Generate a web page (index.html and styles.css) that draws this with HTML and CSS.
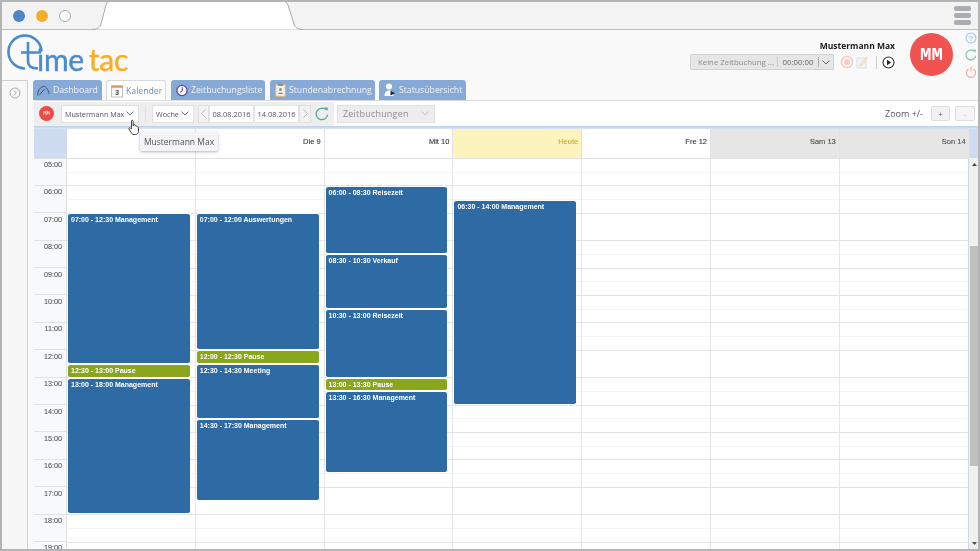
FILE: index.html
```html
<!DOCTYPE html>
<html lang="de">
<head>
<meta charset="utf-8">
<title>TimeTac Kalender</title>
<link rel="stylesheet" href="styles.css">
</head>
<body>
<div class="window">
  <div class="chrome">
    <svg class="chrome-tab" width="320" height="30" viewBox="0 0 320 30"><path d="M92 29.500C98 29.500 100 27 101 24L106 5C107 2 108 1 110 1H283C285 1 287 2 288 5L294 24C295 27 297 29.500 303 29.500" fill="#fff" stroke="#a9a9a9"/></svg>
    <span class="light light-blue"></span><span class="light light-orange"></span><span class="light light-white"></span>
    <div class="burger"><i></i><i></i><i></i></div>
  </div>
  <header class="app-header">
    <div class="logo">
      <svg class="logo-mark" width="44" height="40" viewBox="0 0 44 40"><path d="M36.200 16A16.500 16.500 0 1 0 20 35.500" fill="none" stroke="#4a8bcb" stroke-width="2.600"/><path d="M23 9V28C23 33 26 35.500 33 35.500M16 19.500H36" fill="none" stroke="#4a8bcb" stroke-width="2.600"/></svg>
      <span class="logo-time">ime</span><span class="logo-tac">tac</span>
    </div>
    <div class="user-box">
      <div class="user-col">
        <div class="user-name">Mustermann Max</div>
        <div class="timer-row">
          <div class="timer"><span class="timer-text">Keine Zeitbuchung ...</span><span class="timer-time">00:00:00</span><span class="timer-caret"><svg width="8" height="5" viewBox="0 0 8 5"><path d="M.5.5 4 4 7.500.5" fill="none" stroke="#666"/></svg></span></div>
          <svg class="ic" width="14" height="14" viewBox="0 0 14 14"><circle cx="7" cy="7" r="5.500" fill="none" stroke="#f6c9c6" stroke-width="1.500"/><rect x="4.300" y="4.300" width="5.400" height="5.400" rx="1" fill="#f6c9c6"/></svg>
          <svg class="ic" width="14" height="14" viewBox="0 0 14 14"><rect x="2" y="3" width="9" height="10" fill="#eef3fa" stroke="#d5e2f1"/><path d="M5 9 11 2l2 1-6 7-2.500 1z" fill="#fbe6c4" stroke="#f4d9b0" stroke-width=".6"/></svg>
          <span class="timer-sep"></span>
          <svg class="ic" width="13" height="13" viewBox="0 0 13 13"><circle cx="6.500" cy="6.500" r="5.500" fill="none" stroke="#333" stroke-width="1.100"/><path d="M5 3.800 9.200 6.500 5 9.200z" fill="#222"/></svg>
        </div>
      </div>
      <div class="avatar-big">MM</div>
      <div class="side-icons">
        <svg width="12" height="12" viewBox="0 0 12 12"><circle cx="6" cy="6" r="5" fill="none" stroke="#9cc9ec" stroke-width="1.100"/><text x="6" y="8.600" class="q-mark">?</text></svg>
        <svg width="12" height="12" viewBox="0 0 12 12"><path d="M10.800 6.500A4.900 4.900 0 1 1 9.200 2.300" fill="none" stroke="#7cc5b4" stroke-width="1.200"/><path d="M7.800.4h3.100v3.100z" fill="#7cc5b4"/></svg>
        <svg width="12" height="12" viewBox="0 0 12 12"><path d="M3.500 2.900a4.600 4.600 0 1 0 5 0M6 .8v4.700" fill="none" stroke="#f3a9a6" stroke-width="1.200"/></svg>
      </div>
    </div>
  </header>
  <div class="workspace">
    <aside class="sidebar"><svg class="side-toggle" width="12" height="12" viewBox="0 0 12 12"><circle cx="6" cy="6" r="5" fill="none" stroke="#aaa"/><path d="M4.800 3.500 7.300 6 4.800 8.500" fill="none" stroke="#aaa"/></svg></aside>
    <main class="main">
      <nav class="tabs">
        <a class="tab tab-dash"><svg width="13" height="14" viewBox="0 0 14 14"><path d="M1 13A9.500 9.500 0 0 1 7 3c3 0 5 4 6 8" fill="none" stroke="#3c4d66" stroke-width="1"/><path d="M3 12 8 6" stroke="#3c4d66"/></svg>Dashboard</a>
        <a class="tab tab-active"><svg width="12" height="14" viewBox="0 0 13 14"><rect x=".5" y="1.500" width="12" height="12" fill="#fff" stroke="#bbb"/><rect x=".5" y="1" width="12" height="2.500" fill="#e8935a"/><text x="6.500" y="11.500" class="cal-num">3</text></svg>Kalender</a>
        <a class="tab tab-list"><svg width="12" height="13" viewBox="0 0 13 13"><circle cx="6.500" cy="6.500" r="5.500" fill="#fff" stroke="#5b4c9c" stroke-width="1.400"/><path d="M6.800 3v3.800L4.500 8.500" fill="none" stroke="#5b4c9c" stroke-width="1.200"/></svg>Zeitbuchungsliste</a>
        <a class="tab tab-hours"><svg width="11" height="14" viewBox="0 0 11 14"><rect x=".7" y="1.700" width="9.600" height="11.600" fill="#f8efdc" stroke="#d9b476"/><rect x="3" y=".5" width="5" height="2.500" fill="#7f93b2"/><circle cx="5.500" cy="6.500" r="1.500" fill="#7f93b2"/><path d="M3 11c0-2 5-2 5 0z" fill="#7f93b2"/></svg>Stundenabrechnung</a>
        <a class="tab tab-status"><svg width="12" height="14" viewBox="0 0 12 14"><circle cx="5" cy="3.500" r="3" fill="#fff"/><path d="M.5 13c0-4 2-5.500 4.500-5.500S9.500 9 9.500 13z" fill="#fff"/><path d="M6.500 7.800 11 10.200 6.500 12.600z" fill="#222"/></svg>Statusübersicht</a>
      </nav>
      <div class="toolbar">
        <div class="tool-group">
          <span class="avatar-small">MM</span>
          <span class="select select-user">Mustermann Max<svg width="8" height="5" viewBox="0 0 8 5"><path d="M.5.5 4 4 7.500.5" fill="none" stroke="#777"/></svg></span>
          <span class="tool-sep"></span>
          <span class="select select-week">Woche<svg width="8" height="5" viewBox="0 0 8 5"><path d="M.5.5 4 4 7.500.5" fill="none" stroke="#777"/></svg></span>
          <span class="date-nav date-prev"><svg width="5" height="9" viewBox="0 0 5 9"><path d="M4.500.5.500 4.500 4.500 8.500" fill="none" stroke="#bbb"/></svg></span>
          <span class="date">08.08.2016</span>
          <span class="date">14.08.2016</span>
          <span class="date-nav"><svg width="5" height="9" viewBox="0 0 5 9"><path d="M.5.500 4.500 4.500.5 8.500" fill="none" stroke="#bbb"/></svg></span>
          <svg class="reload" width="14" height="14" viewBox="0 0 12 12"><path d="M10.800 6.500A4.900 4.900 0 1 1 9.200 2.300" fill="none" stroke="#49ad9b" stroke-width="1.100"/><path d="M7.800.4h3.100v3.100z" fill="#49ad9b"/></svg>
        </div>
        <span class="select select-type">Zeitbuchungen<svg width="8" height="5" viewBox="0 0 8 5"><path d="M.5.5 4 4 7.500.5" fill="none" stroke="#bbb"/></svg></span>
        <span class="zoom-label">Zoom +/-</span>
        <span class="zoom-btn">+</span>
        <span class="zoom-btn zoom-off">-</span>
      </div>
      <div class="accent"></div>
      <div class="calendar">
        <div class="cal-main">
          <div class="day-heads">
            <div class="corner"></div>
            <div class="dh"></div>
            <div class="dh">Die 9</div>
            <div class="dh">Mit 10</div>
            <div class="dh dh-today">Heute</div>
            <div class="dh">Fre 12</div>
            <div class="dh dh-off">Sam 13</div>
            <div class="dh dh-off">Son 14</div>
          </div>
          <div class="cal-body">
            <div class="times">
              <div class="t">05:00</div><div class="t">06:00</div><div class="t">07:00</div><div class="t">08:00</div><div class="t">09:00</div><div class="t">10:00</div><div class="t">11:00</div><div class="t">12:00</div><div class="t">13:00</div><div class="t">14:00</div><div class="t">15:00</div><div class="t">16:00</div><div class="t">17:00</div><div class="t">18:00</div><div class="t">19:00</div>
            </div>
            <div class="day">
              <div class="ev" style="grid-row:5/16">07:00 - 12:30 Management</div>
              <div class="ev ev-pause" style="grid-row:16/17">12:30 - 13:00 Pause</div>
              <div class="ev" style="grid-row:17/27">13:00 - 18:00 Management</div>
            </div>
            <div class="day">
              <div class="ev" style="grid-row:5/15">07:00 - 12:00 Auswertungen</div>
              <div class="ev ev-pause" style="grid-row:15/16">12:00 - 12:30 Pause</div>
              <div class="ev" style="grid-row:16/20">12:30 - 14:30 Meeting</div>
              <div class="ev" style="grid-row:20/26">14:30 - 17:30 Management</div>
            </div>
            <div class="day">
              <div class="ev" style="grid-row:3/8">06:00 - 08:30 Reisezeit</div>
              <div class="ev" style="grid-row:8/12">08:30 - 10:30 Verkauf</div>
              <div class="ev" style="grid-row:12/17">10:30 - 13:00 Reisezeit</div>
              <div class="ev ev-pause" style="grid-row:17/18">13:00 - 13:30 Pause</div>
              <div class="ev" style="grid-row:18/24">13:30 - 16:30 Management</div>
            </div>
            <div class="day">
              <div class="ev" style="grid-row:4/19">06:30 - 14:00 Management</div>
            </div>
            <div class="day"></div>
            <div class="day"></div>
            <div class="day"></div>
          </div>
        </div>
        <div class="scrollbar">
          <div class="sb-head"></div>
          <div class="sb-track">
            <svg width="5" height="3" viewBox="0 0 5 3" class="sb-arrow"><path d="M2.500 0 5 3H0z" fill="#444"/></svg>
            <div class="sb-thumb"></div>
            <svg width="5" height="3" viewBox="0 0 5 3" class="sb-arrow"><path d="M0 0H5L2.500 3z" fill="#444"/></svg>
          </div>
        </div>
      </div>
    </main>
  </div>
  <div class="tooltip">Mustermann Max</div>
  <svg class="cursor" width="13" height="17" viewBox="0 0 13 17"><path d="M3.500 1.500c1-.7 1.700 0 1.700 1V7l.5-1.500c1-.4 1.500.2 1.500 1l.2.500c.8-.5 1.500 0 1.500.8.800-.3 1.600 0 1.600 1v3.200c0 2-1 3.500-3 3.500H6c-1.500 0-2.500-1-3-2L1 10c-.4-1 .5-1.700 1.500-1l1 1z" fill="#fff" stroke="#333" stroke-width=".9"/></svg>
</div>
</body>
</html>
```

FILE: styles.css
```css
* { box-sizing: border-box; }
html, body { margin: 0; padding: 0; background: #fff; }
body { font-family: "Open Sans", "Liberation Sans", sans-serif; }
.window {
  position: relative; width: 980px; height: 551px; overflow: hidden;
  display: flex; flex-direction: column;
  border: 2px solid #b4b4b4;
  background: #f9f9f9; filter: blur(.3px);
}
.chrome {
  position: relative; height: 28px; flex: none; background: #f3f3f3;
  border-bottom: 1px solid #bdbdbd; display: flex; align-items: center; padding-left: 11px; gap: 11px;
}
.chrome-tab { position: absolute; left: -2px; top: -2px; }
.light { position: relative; width: 12px; height: 12px; border-radius: 50%; }
.light-blue { background: #4b86c6; }
.light-orange { background: #f3ae2c; }
.light-white { background: #fff; border: 1px solid #aaa; }
.burger { margin-left: auto; margin-right: 7px; display: flex; flex-direction: column; gap: 2px; width: 17px; }
.burger i { display: block; height: 5px; border-radius: 2px; background: #a9adb2; }

.app-header {
  height: 50px; flex: none; display: flex; justify-content: space-between; position: relative;
}
.logo { display: flex; align-items: flex-end; position: relative; padding: 0 0 0 3px; height: 43px; }
.logo-mark { flex: none; margin-top: 3px; }
.logo-time, .logo-tac { font-family: Lato, sans-serif; font-size: 30px; line-height: 34px; letter-spacing: -.3px; margin-bottom: -3px; -webkit-text-stroke: .4px currentColor; }
.logo-time { color: #4a8bcb; margin-left: -12px; }
.logo-tac { color: #f9ae25; margin-left: 5px; }

.user-box { display: flex; align-items: flex-start; }
.user-col { display: flex; flex-direction: column; align-items: flex-end; margin-top: 10px; }
.user-name { font-size: 8.500px; font-weight: 700; color: #1a1a1a; line-height: 12px; }
.timer-row { display: flex; align-items: center; margin-top: 2px; gap: 1px; }
.timer {
  width: 144px; height: 16px; background: #e6e6e6; border: 1px solid #d2d2d2; border-radius: 2px;
  display: flex; align-items: center; font-size: 7.800px; color: #8c8c8c; margin-right: 5px;
}
.timer-text { width: 87px; padding-left: 7px; border-right: 1px solid #c8c8c8; white-space: nowrap; }
.timer-time { width: 41px; text-align: center; color: #666; border-right: 1px solid #aaa; }
.timer-caret { flex: 1; display: flex; justify-content: center; }
.ic { flex: none; }
.timer-sep { width: 1px; height: 13px; background: #ccc; margin: 0 4px 0 6px; }
.avatar-big {
  width: 43px; height: 43px; border-radius: 50%; background: #f15350; color: #fff; flex: none;
  display: flex; align-items: center; justify-content: center; margin: 3px 0 0 15px;
  font-family: "Liberation Mono", monospace; font-size: 19px; font-weight: 700;
}
.side-icons { display: flex; flex-direction: column; gap: 5px; margin: 2px 1px 0 12px; }
.side-icons svg { display: block; }
.q-mark { font: 700 7.500px "Liberation Sans", sans-serif; fill: #9cc9ec; text-anchor: middle; }

.workspace { flex: 1; display: flex; min-height: 0; }
.sidebar {
  width: 26px; flex: none; background: #f7f7f7; border: solid #cfcfcf; border-width: 1px 1px 0 0; padding: 6px 0 0 7px;
}
.side-toggle { display: block; }
.main { flex: 1; min-width: 0; padding-left: 5px; display: flex; flex-direction: column; }
.tabs { height: 20px; flex: none; display: flex; gap: 4px; }
.tab {
  height: 20px; background: #86a9d6; color: #f1f5fb; font-size: 8.700px; border-radius: 3px 3px 0 0;
  display: flex; align-items: center; gap: 3px; padding-left: 5px; white-space: nowrap;
}
.tab svg { flex: none; }
.tab-dash { width: 69px; padding-left: 4px; }
.tab-active { width: 60px; background: #fff; color: #6a8fc3; border: 1px solid #d9d9d9; border-bottom: 0; padding-left: 4px; }
.tab-list { width: 94px; margin-left: 1px; }
.tab-hours { width: 105px; margin-left: 1px; }
.tab-status { width: 87px; }
.toolbar {
  height: 26px; flex: none; margin-left: 1px; background: #fff; display: flex; align-items: center;
  border-top: 1px solid #dcdcdc; font-size: 7.200px; color: #555; padding-right: 3px;
}
.tool-group { display: flex; align-items: center; height: 24px; background: #eee; width: 300px; padding-left: 5px; flex: none; }
.avatar-small {
  width: 15px; height: 15px; border-radius: 50%; background: #ef4a47; color: #fff; flex: none;
  font: 5.500px "Liberation Mono", monospace; display: flex; align-items: center; justify-content: center;
}
.select {
  height: 18px; background: #fff; border: 1px solid #e0e0e0; display: flex; align-items: center; justify-content: space-between;
  padding: 0 4px 0 3px; white-space: nowrap;
}
.select-user { width: 78px; margin-left: 7px; }
.tool-sep { width: 1px; height: 16px; background: #e2e2e2; margin: 0 6px; }
.select-week { width: 42px; }
.date-nav { width: 12px; height: 18px; display: flex; align-items: center; justify-content: center; background: #f3f3f3; border: 1px solid #e0e0e0; flex: none; }
.date-prev { width: 11px; margin-left: 4px; }
.date { width: 45px; height: 18px; background: #fff; border: 1px solid #e4e4e4; display: flex; align-items: center; justify-content: center; font-size: 7.500px; flex: none; }
.reload { margin-left: 4px; flex: none; }
.select-type { width: 98px; margin-left: 3px; background: #ededed; color: #8d8d8d; font-size: 9px; padding: 0 5px; letter-spacing: .2px; }
.zoom-label { margin-left: auto; font-size: 9px; color: #555; margin-right: 8px; }
.zoom-btn {
  width: 19px; height: 15px; background: #f2f2f2; border: 1px solid #dedede; border-radius: 2px; margin-right: 5px;
  display: flex; align-items: center; justify-content: center; font-size: 8px; color: #555;
}
.zoom-btn:last-child { margin-right: 0; width: 20px; }
.zoom-off { color: #bbb; background: #f5f5f5; }
.accent { height: 3px; flex: none; margin-left: 1px; background: linear-gradient(#b9cfea, #dbe6f4); }

.calendar { flex: 1; min-height: 0; margin-left: 1px; display: flex; background: #fff; }
.cal-main { width: 935px; flex: none; display: flex; flex-direction: column; min-height: 0; border-right: 1px solid #cfd8ee; }
.day-heads { height: 29.500px; flex: none; display: grid; grid-template-columns: 33px repeat(7, 128.800px); border-bottom: 1px solid #e0e0e0; }
.corner { background: #cddcf0; }
.dh {
  border-right: 1px solid #e2e2e2; text-align: right; font: 7.500px/26px "Liberation Sans", sans-serif;
  color: #333; padding-right: 3px; -webkit-text-stroke: .1px #333;
}
.dh-today { background: #fdf3bd; color: #c9a033; -webkit-text-stroke: 0; }
.dh-off { background: #e6e6e6; color: #555; }
.dh:last-child { border-right: 0; }
.cal-body { flex: 1; min-height: 0; overflow: hidden; display: grid; grid-template-columns: 33px repeat(7, 128.800px); align-items: start; }
.times { background: #f6fafd; border-right: 1px solid #e0e0e0; }
.t {
  height: 27.400px; border-bottom: 1px solid #e2e2e2; text-align: right; padding: 1.500px 4px 0 0;
  font: 7.200px/10px "Liberation Sans", sans-serif; color: #555; -webkit-text-stroke: .1px #555;
}
.day {
  height: 411px; display: grid; grid-template-rows: repeat(30, 13.700px); grid-template-columns: 1fr;
  border-right: 1px solid #e6e6e6; padding: 0 5px 0 1px;
  background: repeating-linear-gradient(#fff 0, #fff 12.800px, #f3f3f3 12.800px, #f3f3f3 13.700px, #fff 13.700px, #fff 26.400px, #e4e4e4 26.400px, #e4e4e4 27.400px);
}
.day:last-child { border-right: 0; }
.ev {
  background: #2e6ba5; color: #fff; border-radius: 2.500px; border: solid #fff; border-width: .5px 0;
  font: 700 7px/9px "Liberation Sans", sans-serif; padding: 1px 3px; white-space: nowrap; overflow: hidden; min-height: 0;
}
.ev-pause { background: #8aa61c; }

.scrollbar { width: 10px; flex: none; display: flex; flex-direction: column; background: #f0f0f0; }
.sb-head { height: 29px; flex: none; background: #cddcf0; }
.sb-track { flex: 1; display: flex; flex-direction: column; align-items: center; padding-top: 5px; }
.sb-arrow { flex: none; display: block; }
.sb-thumb { width: 9px; height: 220px; background: #c0c0c0; margin-top: 80px; margin-bottom: 76px; }

.tooltip {
  position: absolute; left: 138px; top: 130px; width: 78px; height: 19px; background: #f2f4f8; border-radius: 2px;
  box-shadow: 0 1px 3px rgba(0,0,0,.3); font-size: 8.500px; color: #555; display: flex; align-items: center; justify-content: center; white-space: nowrap;
}
.cursor { position: absolute; left: 126px; top: 117px; }
.cal-num { font: 700 8px "Liberation Sans", sans-serif; fill: #444; text-anchor: middle; }
```
